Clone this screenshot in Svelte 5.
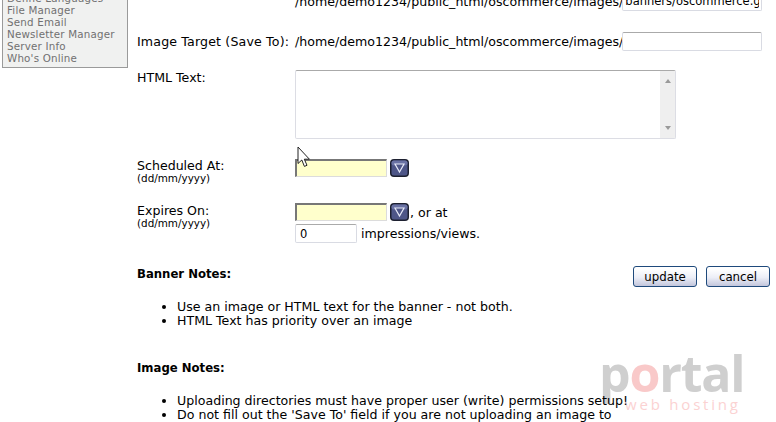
<script>
  const menu = ['Define Languages', 'File Manager', 'Send Email', 'Newsletter Manager', 'Server Info', "Who's Online"];
  const bannerNotes = ['Use an image or HTML text for the banner - not both.', 'HTML Text has priority over an image'];
  const imageNotes = [
    'Uploading directories must have proper user (write) permissions setup!',
    "Do not fill out the 'Save To' field if you are not uploading an image to"
  ];
  const path = '/home/demo1234/public_html/oscommerce/images/';
</script>

<div class="page">
  <aside class="sidebar">
    <ul>
      {#each menu as item}
        <li>{item}</li>
      {/each}
    </ul>
  </aside>

  <main class="content">
    <div class="form">
      <div class="row row-first">
        <span></span>
        <div class="value">{path}<input class="text path" value="banners/oscommerce.gif" /></div>
      </div>
      <div class="row row-target">
        <span class="target-label">Image Target (Save To):</span>
        <div class="value">{path}<input class="text path" /></div>
      </div>
      <div class="row row-html">
        <span class="html-label">HTML Text:</span>
        <div class="textarea">
          <div class="scrollbar">
            <span class="arrow up"></span>
            <span class="arrow down"></span>
          </div>
        </div>
      </div>
      <div class="row row-date">
        <div>Scheduled At:<small>(dd/mm/yyyy)</small></div>
        <div class="value date-cell">
          <input class="date" />
          {@render calendar()}
        </div>
      </div>
      <div class="row row-expires">
        <div>Expires On:<small>(dd/mm/yyyy)</small></div>
        <div class="expires-cell">
          <div class="value">
            <input class="date" />
            {@render calendar()}
            <span class="or">, or at</span>
          </div>
          <div class="value views">
            <input class="text count" value="0" />
            <span>impressions/views.</span>
          </div>
        </div>
      </div>
    </div>

    <section class="notes banner">
      <div class="notes-head">
        <h4>Banner Notes:</h4>
        <div class="buttons">
          <button>update</button>
          <button>cancel</button>
        </div>
      </div>
      <ul>
        {#each bannerNotes as note}
          <li>{note}</li>
        {/each}
      </ul>
    </section>

    <section class="notes image">
      <h4>Image Notes:</h4>
      <ul>
        {#each imageNotes as note}
          <li>{note}</li>
        {/each}
      </ul>
    </section>
  </main>

  <!-- watermark, sits behind the page text -->
  <div class="watermark" aria-hidden="true">
    <div class="logo">p<span>o</span>rtal</div>
    <div class="sub">web hosting</div>
  </div>

  <!-- mouse cursor -->
  <svg class="cursor" width="15" height="23" viewBox="0 0 15 23" aria-hidden="true">
    <path d="M1 1 L1 17.5 L4.8 14 L7.4 20.4 L10 19.3 L7.3 13.2 L12.4 13.2 Z" fill="#fff" stroke="#222" stroke-width="1" />
  </svg>
</div>

{#snippet calendar()}
  <svg class="cal" width="19" height="18" viewBox="0 0 19 18" aria-hidden="true">
    <rect x="0" y="0" width="19" height="18" rx="4" fill="#1d2030" />
    <rect x="1.5" y="1.5" width="16" height="15" rx="2.5" fill="#4e5688" />
    <rect x="1.5" y="1.5" width="16" height="5" rx="2.5" fill="#6a72a4" />
    <path d="M5 5 H14 L9.5 13 Z" fill="#4e5688" stroke="#e6e9f8" stroke-width="1.2" />
  </svg>
{/snippet}

<style>
  :global(body) {
    margin: 0;
    background: #fff;
  }

  .page {
    position: relative;
    width: 776px;
    height: 422px;
    overflow: hidden;
    display: flex;
    font-family: 'DejaVu Sans', Verdana, sans-serif;
    font-size: 12.6px;
    color: #000;
  }

  /* Sidebar, scrolled out at the top */
  .sidebar {
    width: 126px;
    height: 68px;
    margin-left: 2px;
    flex: none;
    box-sizing: border-box;
    border: 1px solid #9a9a9a;
    border-top: 0;
    background: #f0f1f0;
    overflow: hidden;
    display: flex;
    align-items: flex-end;
  }

  .sidebar ul {
    list-style: none;
    margin: 0 0 3px;
    padding: 0 0 0 4px;
  }

  .sidebar li {
    font-size: 10.3px;
    line-height: 12px;
    color: #707070;
    white-space: nowrap;
    letter-spacing: 0.2px;
  }

  .content {
    position: relative;
    z-index: 1;
    margin-left: 9px;
    flex: 1;
    min-width: 0;
  }

  .form {
    margin-top: -9px;
  }

  .row {
    display: grid;
    grid-template-columns: 158px 1fr;
    white-space: nowrap;
  }

  .value {
    display: flex;
    align-items: center;
  }

  .row-first {
    height: 20px;
    align-items: center;
  }

  .row-target {
    margin-top: 20px;
    height: 20px;
    align-items: center;
  }

  .target-label {
    letter-spacing: 0.15px;
  }

  .row-html {
    margin-top: 19px;
  }

  .html-label {
    line-height: 15px;
  }

  input {
    box-sizing: border-box;
    margin: 0;
    font: inherit;
    outline: none;
  }

  .text {
    border: 1px solid #d9dbe3;
    border-top-color: #aaa;
    border-radius: 2px;
    background: #fff;
    padding: 0 2px;
  }

  .path {
    width: 140px;
    height: 19px;
    margin-left: -1px;
    font-size: 11.5px;
  }

  .textarea {
    box-sizing: border-box;
    width: 381px;
    height: 69px;
    border: 1px solid #dcdde4;
    border-top-color: #aaa;
    border-radius: 2px;
    display: flex;
    justify-content: flex-end;
  }

  .scrollbar {
    width: 15px;
    background: #efefef;
    display: flex;
    flex-direction: column;
    justify-content: space-between;
    align-items: center;
    padding: 8px 0;
  }

  .arrow {
    width: 0;
    height: 0;
    border-left: 3.5px solid transparent;
    border-right: 3.5px solid transparent;
  }

  .arrow.up {
    border-bottom: 4px solid #9a9a9a;
  }

  .arrow.down {
    border-top: 4px solid #9a9a9a;
  }

  .row-date {
    margin-top: 20px;
    line-height: 13px;
  }

  .row-expires {
    margin-top: 20px;
    line-height: 13px;
  }

  .date-cell {
    align-self: start;
  }

  .expires-cell {
    margin-top: -1px;
  }

  small {
    display: block;
    font-size: 10.4px;
    line-height: 12px;
  }

  .date {
    width: 92px;
    height: 18px;
    border: 1px solid #dcdcdc;
    border-top: 2px solid #777;
    border-left: 2px solid #777;
    background: #ffffcc;
  }

  .cal {
    margin-left: 3px;
    flex: none;
  }

  .or {
    margin-left: 1px;
  }

  .views {
    margin-top: 3px;
  }

  .count {
    width: 62px;
    height: 19px;
    margin-right: 4px;
    padding-left: 4px;
    font-size: 11.5px;
  }

  .notes h4 {
    margin: 0;
    font-size: 11.7px;
    line-height: 15px;
    font-weight: bold;
  }

  .notes ul {
    margin: 0;
    padding-left: 40px;
  }

  .notes li {
    line-height: 14px;
  }

  .banner {
    margin-top: 24px;
  }

  .notes-head {
    display: flex;
    justify-content: space-between;
    align-items: flex-start;
    height: 33px;
  }

  .buttons {
    display: flex;
    gap: 9px;
    margin-right: 6px;
    margin-top: -1px;
  }

  button {
    width: 64px;
    height: 21px;
    padding: 0;
    border: 1px solid #1f4a7c;
    border-radius: 3px;
    background: linear-gradient(#fff 10%, #eceef7 55%, #c3c6dc);
    font-family: inherit;
    font-size: 11.8px;
    color: #000;
  }

  .image {
    margin-top: 33px;
  }

  .image ul {
    margin-top: 18px;
  }

  .watermark {
    position: absolute;
    left: 599px;
    top: 348px;
    width: 146px;
    pointer-events: none;
    font-family: 'Open Sans', 'DejaVu Sans', sans-serif;
  }

  .logo {
    font-size: 50px;
    font-weight: bold;
    line-height: 50px;
    color: #cfcfcf;
    letter-spacing: -1.2px;
    white-space: nowrap;
  }

  .logo span {
    color: #f9c9c9;
  }

  .sub {
    margin-top: -3px;
    margin-left: 26px;
    font-size: 15px;
    line-height: 18px;
    letter-spacing: 2.8px;
    color: #fbd2d2;
    white-space: nowrap;
  }

  .cursor {
    position: absolute;
    z-index: 2;
    left: 297px;
    top: 146px;
  }
</style>
